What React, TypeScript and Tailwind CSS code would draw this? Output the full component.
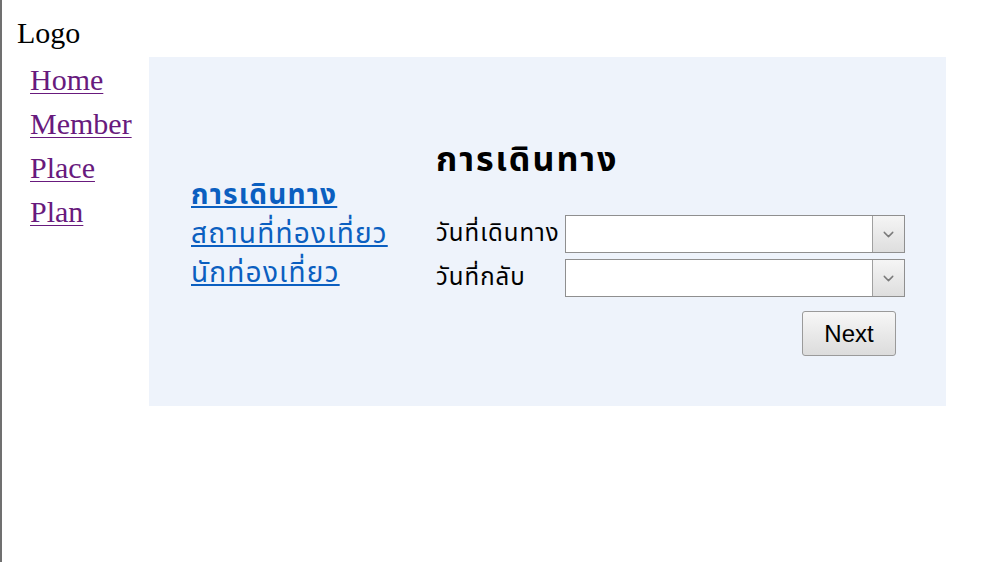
import { ChevronDown } from 'lucide-react';

const serif = { fontFamily: '"Liberation Serif", "Times New Roman", serif' };
const thai = { fontFamily: 'Tahoma, "Noto Sans Thai", "DejaVu Sans", sans-serif' };

function DateSelect() {
  return (
    <div className="flex h-[38px] w-[340px] border border-[#8f8f8f] bg-white">
      <div className="flex-1" />
      <div className="flex w-[32px] items-center justify-center border-l border-[#a0a0a0] bg-gradient-to-b from-[#f5f5f5] to-[#dedede]">
        <ChevronDown size={17} strokeWidth={2} className="text-[#7a7a7a]" />
      </div>
    </div>
  );
}

export default function App() {
  return (
    <div className="h-screen w-full border-l-2 border-[#707070] bg-white text-black">
      <div className="pl-[15px] pt-[16px] text-[30px] leading-[34px]" style={serif}>
        Logo
      </div>
      <div className="flex pt-[7px]">
        <nav className="flex w-[147px] flex-col pl-[28px] pt-[1px] text-[30px] leading-[44px]" style={serif}>
          {['Home', 'Member', 'Place', 'Plan'].map((l) => (
            <a key={l} href="#" className="text-[#681a7d] underline decoration-1 underline-offset-[3px]">
              {l}
            </a>
          ))}
        </nav>
        <section className="flex h-[349px] w-[797px] items-start bg-[#eef3fb] pl-[42px]" style={thai}>
          <div className="flex w-[245px] flex-col pt-[119px] text-[28px] leading-[39px] tracking-[1.2px]">
            <a href="#" className="font-bold text-[#0b5fc0] underline">การเดินทาง</a>
            <a href="#" className="text-[#0b5fc0] underline">สถานที่ท่องเที่ยว</a>
            <a href="#" className="text-[#0b5fc0] underline">นักท่องเที่ยว</a>
          </div>
          <div className="flex flex-col pt-[84px]">
            <h1 className="text-[34px] font-bold leading-[40px] tracking-[2px]">การเดินทาง</h1>
            <div className="mt-[34px] flex flex-col gap-[6px] text-[24px] tracking-[1px]">
              <div className="flex items-center">
                <span className="w-[129px]">วันที่เดินทาง</span>
                <DateSelect />
              </div>
              <div className="flex items-center">
                <span className="w-[129px]">วันที่กลับ</span>
                <DateSelect />
              </div>
            </div>
            <div className="mt-[14px] flex justify-end pr-[9px]">
              <button
                className="h-[45px] w-[94px] rounded-[3px] border border-[#9a9a9a] bg-gradient-to-b from-[#f7f7f7] to-[#dcdcdc] text-[24px] tracking-normal"
                style={{ fontFamily: '"Liberation Sans", Arial, sans-serif' }}
              >
                Next
              </button>
            </div>
          </div>
        </section>
      </div>
    </div>
  );
}
